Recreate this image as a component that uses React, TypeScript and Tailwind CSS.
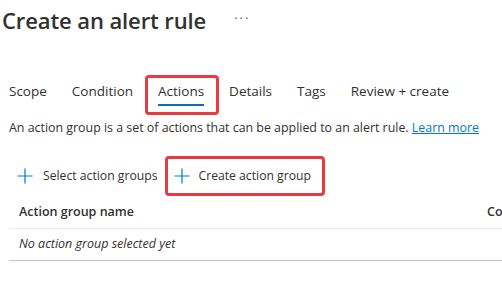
import React from 'react';

const tabs = ['Scope', 'Condition', 'Actions', 'Details', 'Tags', 'Review + create'];

const PlusIcon: React.FC = () => (
  <svg width="16" height="16" viewBox="0 0 16 16" className="shrink-0">
    <path d="M8 0.5v15M0.5 8h15" stroke="#0078d4" strokeWidth="1.2" fill="none" />
  </svg>
);

const App: React.FC = () => {
  return (
    <div
      className="w-[502px] h-[291px] overflow-hidden bg-white text-[#323130]"
      style={{ fontFamily: '"Segoe UI", "Open Sans", sans-serif' }}
    >
      {/* Title */}
      <div className="flex items-center h-[28px] mt-[6px] pl-[2px]">
        <h1 className="text-[22px] font-semibold leading-[28px] tracking-[-0.1px]">Create an alert rule</h1>
        <span className="ml-[28px] text-[13px] text-[#605e5c] tracking-[2px] leading-none pb-[4px]">···</span>
      </div>

      {/* Tabs */}
      <div className="flex gap-[25px] pl-[9px] mt-[47px]">
        {tabs.map((t) => (
          <div key={t} className="relative flex flex-col items-stretch">
            <span className="text-[13.5px] leading-[20px] whitespace-nowrap">{t}</span>
            <span className={`h-[2px] mt-[3px] ${t === 'Actions' ? 'bg-[#0f6cbd]' : 'bg-transparent'}`} />
            {t === 'Actions' && (
              <span className="absolute -left-[13px] -right-[15px] -top-[6px] -bottom-[9px] border-[3px] border-[#e83b41] rounded-[4px]" />
            )}
          </div>
        ))}
      </div>

      {/* Description */}
      <p className="pl-[9px] mt-[13px] text-[12.4px] leading-[18px] whitespace-nowrap">
        An action group is a set of actions that can be applied to an alert rule.{' '}
        <a href="#" className="text-[#0078d4] underline">Learn more</a>
      </p>

      {/* Commands */}
      <div className="flex items-center h-[40px] mt-[19px] pl-[17px]">
        <button className="flex items-center gap-[10px] text-[12.2px] leading-[18px]">
          <PlusIcon />
          <span>Select action groups</span>
        </button>
        <button className="relative flex items-center gap-[8px] ml-[17px] text-[12.2px] leading-[18px]">
          <PlusIcon />
          <span>Create action group</span>
          <span className="absolute -left-[9px] -right-[14px] -top-[11px] -bottom-[11px] border-[3px] border-[#e83b41] rounded-[4px]" />
        </button>
      </div>

      {/* Table */}
      <div className="ml-[9px] mt-[1px] w-[600px]">
        <div className="flex items-center h-[32px] border-b border-[#edebe9] text-[12.5px] font-semibold whitespace-nowrap">
          <span className="pl-[10px] w-[478px] shrink-0">Action group name</span>
          <span className="shrink-0">Contains actions</span>
        </div>
        <div className="flex items-center h-[32px] border-b border-[#c8c6c4] text-[12.5px] italic">
          <span className="pl-[10px]">No action group selected yet</span>
        </div>
      </div>
    </div>
  );
};

export default App;
